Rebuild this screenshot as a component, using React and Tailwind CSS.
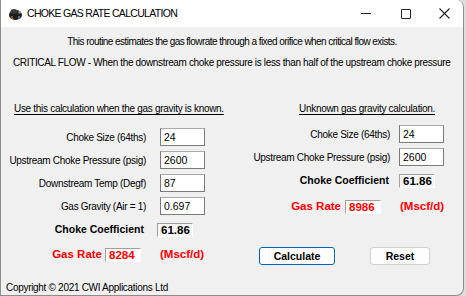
import React from "react";

const Field = ({ value }) => (
  <div className="w-[45px] h-[18px] bg-white border border-[#7a7a7a] border-t-[#a8a8a8] text-[10.5px] leading-[16px] pl-[3px] text-black">
    {value}
  </div>
);

const Readout = ({ value, red }) => (
  <div
    className={`h-[14px] w-[36px] border border-[#a0a0a0] border-b-white border-r-white text-[11.5px] leading-[12px] pl-[3px] font-bold ${
      red ? "text-[#ff0000] bg-white" : "text-black bg-[#f6f6f6]"
    }`}
  >
    {value}
  </div>
);

const AppIcon = () => (
  <svg width="15" height="13" viewBox="0 0 15 13">
    <ellipse cx="7.5" cy="7" rx="6.5" ry="5" fill="#1c1c1c" />
    <ellipse cx="6" cy="3.5" rx="3.5" ry="2.5" fill="#3a3a3a" />
    <rect x="3" y="8" width="2" height="3" fill="#7a5a2a" />
    <rect x="10" y="8" width="2" height="3" fill="#5a6a8a" />
    <circle cx="11.5" cy="4.5" r="1.3" fill="#9a9a9a" />
  </svg>
);

export default function App() {
  return (
    <div
      className="w-[466px] h-[296px] bg-[#dcdcdc] overflow-hidden"
      style={{ fontFamily: '"Liberation Sans", Arial, sans-serif' }}
    >
      <div className="w-[464px] h-[296px] bg-[#f0f0f0] rounded-tr-[8px] rounded-br-[8px] border-l border-r border-b border-[#8c8c8c] flex flex-col overflow-hidden">
        {/* title bar */}
        <div className="h-[27px] bg-white flex items-center shrink-0">
          <div className="ml-[7px] mt-[1px]">
            <AppIcon />
          </div>
          <div className="ml-[4px] text-[10.5px] tracking-[-0.7px] text-black">CHOKE GAS RATE CALCULATION</div>
          <div className="ml-auto flex h-full items-center">
            <div className="w-[40px] flex justify-center">
              <div className="w-[10px] h-[1px] bg-[#222]" />
            </div>
            <div className="w-[40px] flex justify-center">
              <div className="w-[10px] h-[10px] border border-[#222] rounded-[1px]" />
            </div>
            <div className="w-[37px] flex justify-center">
              <svg width="11" height="11" viewBox="0 0 11 11">
                <path d="M0.5 0.5 L10.5 10.5 M10.5 0.5 L0.5 10.5" stroke="#222" strokeWidth="1.1" />
              </svg>
            </div>
          </div>
        </div>

        {/* body */}
        <div className="flex-1 flex flex-col text-[10px] tracking-[-0.3px] text-black">
          <div className="mt-[8px] text-center leading-[13px] tracking-[-0.55px]">
            This routine estimates the gas flowrate through a fixed orifice when critical flow exists.
          </div>
          <div className="mt-[8px] ml-[12px] leading-[13px] whitespace-nowrap tracking-[-0.35px]">
            CRITICAL FLOW - When the downstream choke pressure is less than half of the upstream choke pressure
          </div>

          <div className="flex mt-[33px]">
            {/* left column */}
            <div className="w-[232px] flex flex-col">
              <div className="ml-[13px] underline leading-[13px] underline-offset-[2px] whitespace-nowrap">
                Use this calculation when the gas gravity is known.
              </div>
              <div className="flex flex-col gap-[5px] mt-[13px]">
                {[
                  ["Choke Size (64ths)", "24"],
                  ["Upstream Choke Pressure (psig)", "2600"],
                  ["Downstream Temp (Degf)", "87"],
                  ["Gas Gravity (Air = 1)", "0.697"],
                ].map(([label, value]) => (
                  <div key={label} className="flex items-center">
                    <div className="w-[145px] text-right whitespace-nowrap">{label}</div>
                    <div className="ml-[14px] tracking-normal">
                      <Field value={value} />
                    </div>
                  </div>
                ))}
              </div>
              <div className="flex items-center mt-[8px] h-[14px]">
                <div className="w-[143px] text-right font-bold text-[10.5px] tracking-normal whitespace-nowrap">Choke Coefficient</div>
                <div className="ml-[13px] tracking-normal">
                  <Readout value="61.86" />
                </div>
              </div>
              <div className="flex items-center mt-[11px] h-[14px] tracking-normal">
                <div className="w-[101px] text-right font-bold text-[11.5px] text-[#ff0000] whitespace-nowrap">Gas Rate</div>
                <div className="ml-[3px]">
                  <Readout value="8284" red />
                </div>
                <div className="ml-[19px] font-bold text-[11.5px] text-[#ff0000]">(Mscf/d)</div>
              </div>
            </div>

            {/* right column */}
            <div className="flex-1 flex flex-col">
              <div className="ml-[66px] underline leading-[13px] underline-offset-[2px] whitespace-nowrap">
                Unknown gas gravity calculation.
              </div>
              <div className="flex flex-col gap-[5px] mt-[10px]">
                {[
                  ["Choke Size (64ths)", "24"],
                  ["Upstream Choke Pressure (psig)", "2600"],
                ].map(([label, value]) => (
                  <div key={label} className="flex items-center">
                    <div className="w-[157px] text-right whitespace-nowrap">{label}</div>
                    <div className="ml-[9px] tracking-normal">
                      <Field value={value} />
                    </div>
                  </div>
                ))}
              </div>
              <div className="flex items-center mt-[8px] h-[14px] tracking-normal">
                <div className="w-[156px] text-right font-bold text-[10.5px] whitespace-nowrap">Choke Coefficient</div>
                <div className="ml-[10px]">
                  <Readout value="61.86" />
                </div>
              </div>
              <div className="flex items-center mt-[12px] h-[14px] tracking-normal">
                <div className="w-[108px] text-right font-bold text-[11.5px] text-[#ff0000] whitespace-nowrap">Gas Rate</div>
                <div className="ml-[4px]">
                  <Readout value="8986" red />
                </div>
                <div className="ml-[19px] font-bold text-[11.5px] text-[#ff0000]">(Mscf/d)</div>
              </div>
              <div className="flex mt-[33px] ml-[26px] tracking-normal">
                <button className="w-[76px] h-[18px] rounded-[3px] border-[1.5px] border-[#0067c0] bg-[#fdfdfd] text-[10.5px] font-bold leading-[14px] text-black">
                  Calculate
                </button>
                <button className="ml-[35px] w-[60px] h-[18px] rounded-[3px] border border-[#cfcfcf] bg-[#fdfdfd] text-[10.5px] font-bold leading-[14px] text-black">
                  Reset
                </button>
              </div>
            </div>
          </div>

          <div className="mt-auto mb-[1px] ml-[5px] leading-[13px] whitespace-nowrap">
            Copyright © 2021 CWI Applications Ltd
          </div>
        </div>
      </div>
    </div>
  );
}
